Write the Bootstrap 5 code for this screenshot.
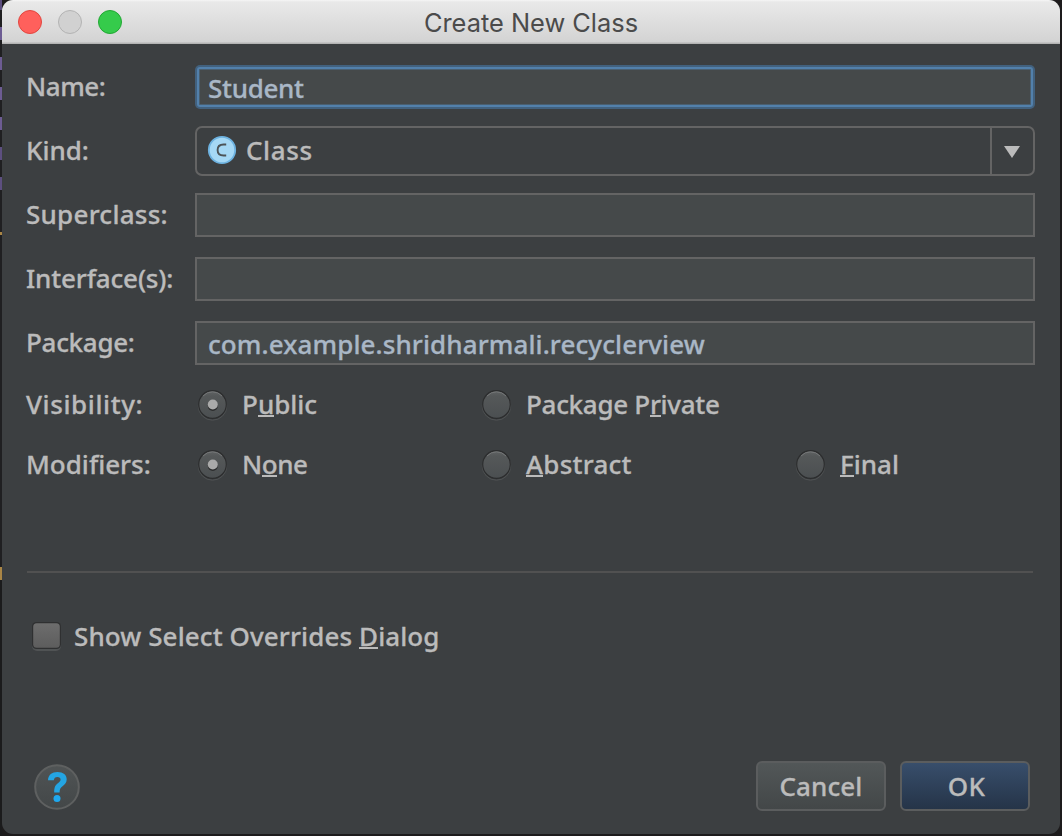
<!DOCTYPE html>
<html lang="en">
<head>
<meta charset="utf-8">
<title>Create New Class</title>
<link href="https://cdn.jsdelivr.net/npm/bootstrap@5.3.0/dist/css/bootstrap.min.css" rel="stylesheet">
<script src="https://cdn.jsdelivr.net/npm/bootstrap@5.3.0/dist/js/bootstrap.bundle.min.js" defer></script>
<style>
  body { height: 836px; overflow: hidden; color: #bbb; font: 500 26px/32px "Noto Sans", sans-serif;
    background: linear-gradient(#5d4f80 0 10px, #1f1f21 10px 27px, #6d5c93 27px 40px, #1f1f21 40px 57px, #6d5c93 57px 70px, #1f1f21 70px 87px, #6d5c93 87px 100px, #1f1f21 100px 117px, #6d5c93 117px 130px, #1f1f21 130px 147px, #5d4f80 147px 160px, #1f1f21 160px 177px, #5d4f80 177px 190px, #1f1f21 190px 232px, #a98545 232px 235px, #1f1f21 235px 567px, #a98545 567px 580px, #1b1b1c 580px) 0 0 / 2px 100% no-repeat, #1d1b1c; }
  .dialog { width: 1058px; height: 834px; margin-left: 2px; border-radius: 11px; background: #3c3f41; }
  .titlebar { height: 44px; background: linear-gradient(#f6f6f6 0, #e9e9e9 2px, #d3d3d3 42px, #b4b4b4 43px); color: #4b4b4b; font-family: Inter, sans-serif; font-size: 25.4px; font-weight: 400; border-radius: 11px 11px 0 0; }
  .lights { width: 94px; }
  .title-text { padding: 2px 94px 0 0; }
  .light { width: 24px; height: 24px; border: 1px solid; }
  .light-close { background: #ff605c; border-color: #e2463f; }
  .light-min { background: #d1d1d1; border-color: #b3b3b3; }
  .light-zoom { background: #35cb4b; border-color: #21a833; }
  form { padding: 10px 25px 0 24px; -webkit-text-stroke: .3px currentColor; }
  .field-row { height: 64px; }
  .radio-row { height: 60px; }
  .lbl { width: 169px; flex: none; }
  .field { height: 44px; margin-top: 2px; border: 2px solid #646464; background: #45494a; color: #a9b7c6; padding: 1px 0 0 11px; }
  .field-focus { height: 40px; margin: 1px 2px 0; border-color: #5280ab; border-radius: 3px; box-shadow: 0 0 0 2px #42617e, inset 0 0 0 1px #4a5f70; padding: 2px 0 0 9px; }
  .combo { height: 50px; margin-top: 1px; border: 2px solid #646464; border-radius: 7px; padding: 0 0 0 10px; }
  .combo-icon { margin-top: -1px; }
  .combo-text { padding-left: 9px; margin-top: -1px; }
  .combo-arrow { width: 43px; border-left: 2px solid #646464; }
  .combo-arrow svg { margin: 2px 2px 0 0; }
  .opt-a { width: 284px; }
  .opt-b { width: 314px; }
  .radio-icon { width: 32px; height: 32px; margin: 2px 14px 0 1px; flex: none; }
  u { text-decoration: none; background: linear-gradient(#bbb, #bbb) 0 27px / 100% 2px no-repeat; display: inline-block; }
  .rule { height: 2px; margin: 77px 2px 0 1px; background: #515151; }
  .check-row { height: 126px; }
  .check-icon { width: 32px; height: 32px; margin: 0 12px 0 4px; }
  .actions { padding: 62px 5px 0 7.5px; }
  .help { width: 46px; height: 46px; margin-top: 1px; }
  .push { width: 130px; height: 50px; border: 2px solid #5b5d5e; border-radius: 6px; color: #bbb; background: linear-gradient(#525758, #434748); }
  .push-ok { margin-left: 14px; background: linear-gradient(#384e6b, #253448); padding-left: 3px; }
  .k-4 { letter-spacing: -.45px; } .k-3 { letter-spacing: -.3px; } .k-1 { letter-spacing: -.15px; } .k0 { letter-spacing: 0; } .k1 { letter-spacing: .1px; }
  .k3 { letter-spacing: .25px; } .k6 { letter-spacing: .6px; }
</style>
</head>
<body>
<svg width="0" height="0" class="position-absolute">
  <defs>
    <linearGradient id="rg" x1="0" y1="0" x2="0" y2="1"><stop offset="0" stop-color="#606364"/><stop offset=".2" stop-color="#555859"/><stop offset="1" stop-color="#4b4f51"/></linearGradient>
    <linearGradient id="hg" x1="0" y1="0" x2="0" y2="1"><stop offset="0" stop-color="#505455"/><stop offset="1" stop-color="#434748"/></linearGradient>
    <linearGradient id="kg" x1="0" y1="0" x2="0" y2="1"><stop offset="0" stop-color="#6d6d6d"/><stop offset="1" stop-color="#5d5d5d"/></linearGradient>
    <symbol id="radio" viewBox="0 0 32 32"><circle cx="16.500" cy="17" r="14.200" fill="none" stroke="#505354"/><circle cx="16.500" cy="15.500" r="13.800" fill="url(#rg)" stroke="#2c2d2e" stroke-width="1.200"/><path d="M7 7a13 13 0 0 1 19 0" fill="none" stroke="#747677"/></symbol>
    <symbol id="radio-on" viewBox="0 0 32 32"><use href="#radio"/><circle cx="16.800" cy="17" r="5" fill="#2b2c2d"/><circle cx="16.800" cy="15.500" r="5" fill="#aaa"/></symbol>
  </defs>
</svg>
<main class="dialog d-flex flex-column">
  <header class="titlebar d-flex align-items-center">
    <div class="lights d-flex gap-3 ps-3"><span class="light light-close rounded-circle flex-shrink-0"></span><span class="light light-min rounded-circle flex-shrink-0"></span><span class="light light-zoom rounded-circle flex-shrink-0"></span></div>
    <div class="title-text flex-fill text-center">Create New Class</div>
  </header>
  <form>
    <div class="field-row d-flex align-items-center"><div class="lbl k-4">Name:</div><div class="field field-focus flex-fill d-flex align-items-center k-3">Student</div></div>
    <div class="field-row d-flex align-items-center"><div class="lbl">Kind:</div>
      <div class="combo flex-fill d-flex align-items-center">
        <svg class="combo-icon" width="30" height="30" viewBox="0 0 30 30"><circle cx="15" cy="15" r="13.200" fill="#a5d8f5" stroke="#6db2e0" stroke-width="1.800"/><path d="M19.200 9.500h-2.600c-3.700 0-6 2-6 5.500s2.300 5.500 6 5.500h2.600" fill="none" stroke="#4c5357" stroke-width="1.900"/></svg>
        <span class="combo-text flex-fill k6">Class</span>
        <span class="combo-arrow h-100 d-flex align-items-center justify-content-center"><svg width="16" height="12" viewBox="0 0 16 12"><path d="M0 0h16L8 12z" fill="#bbb"/></svg></span>
      </div></div>
    <div class="field-row d-flex align-items-center"><div class="lbl k3">Superclass:</div><div class="field flex-fill"></div></div>
    <div class="field-row d-flex align-items-center"><div class="lbl k-1">Interface(s):</div><div class="field flex-fill"></div></div>
    <div class="field-row d-flex align-items-center"><div class="lbl k-3">Package:</div><div class="field flex-fill d-flex align-items-center k1">com.example.shridharmali.recyclerview</div></div>
    <div class="radio-row d-flex align-items-center"><div class="lbl k6">Visibility:</div>
      <label class="opt-a d-flex align-items-center k0"><svg class="radio-icon"><use href="#radio-on"/></svg><span>P<u>u</u>blic</span></label>
      <label class="opt-b d-flex align-items-center k-3"><svg class="radio-icon"><use href="#radio"/></svg><span>Package P<u>r</u>ivate</span></label></div>
    <div class="radio-row d-flex align-items-center"><div class="lbl k0">Modifiers:</div>
      <label class="opt-a d-flex align-items-center k-4"><svg class="radio-icon"><use href="#radio-on"/></svg><span>N<u>o</u>ne</span></label>
      <label class="opt-b d-flex align-items-center k3"><svg class="radio-icon"><use href="#radio"/></svg><span><u>A</u>bstract</span></label>
      <label class="d-flex align-items-center k0"><svg class="radio-icon"><use href="#radio"/></svg><span><u>F</u>inal</span></label></div>
    <div class="rule"></div>
    <label class="check-row d-flex align-items-center k1"><svg class="check-icon" viewBox="0 0 32 32"><rect x="2" y="4" width="29" height="27" rx="5" fill="#505354"/><rect x="2" y="2" width="29" height="27" rx="4.500" fill="#2f3031"/><rect x="3.200" y="3.200" width="26.600" height="24.600" rx="3.500" fill="url(#kg)"/></svg><span>Show Select Overrides <u>D</u>ialog</span></label>
    <div class="actions d-flex align-items-center">
      <svg class="help" viewBox="0 0 46 46"><circle cx="23" cy="23" r="21.800" fill="url(#hg)" stroke="#5e6060" stroke-width="2"/><path d="M14 16.200C14.200 10.800 18 8 23.500 8c5.700 0 9.200 2.900 9.200 7.300 0 3.200-1.700 5.100-4.200 6.900-2.200 1.600-2.900 3-2.900 6.300h-5.400c0-5 .8-7 3.700-9.200 1.800-1.400 2.700-2.300 2.700-3.700 0-1.700-1.200-2.700-3.200-2.700-2.100 0-3.400 1.200-3.600 3.300z" fill="#24a5e3"/><circle cx="23" cy="34.600" r="3.500" fill="#1fa8ee"/></svg>
      <span class="push d-flex align-items-center justify-content-center ms-auto k1">Cancel</span>
      <span class="push push-ok d-flex align-items-center justify-content-center k3">OK</span>
    </div>
  </form>
</main>
</body>
</html>
